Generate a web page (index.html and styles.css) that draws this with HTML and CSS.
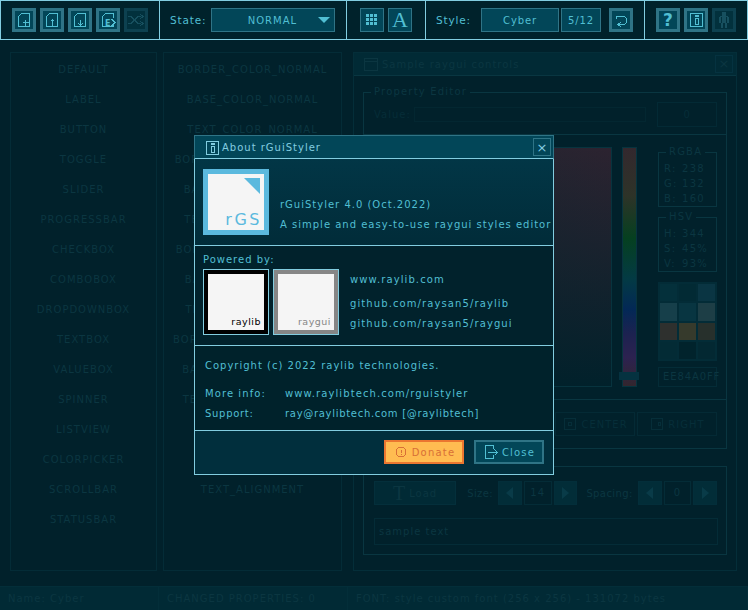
FILE: index.html
```html
<!DOCTYPE html>
<html lang="en">
<head>
  <meta charset="UTF-8">
  <title>rGuiStyler</title>
  <link rel="stylesheet" href="styles.css">
</head>
<body>
  <div class="app">
    <!-- Toolbar -->
    <header class="toolbar">
      <section class="tool-section files">
        <button class="tool-btn"><svg class="icon" viewBox="0 0 16 16"><path d="M5.5 1.5H13.5V14.5H2.5V4.5ZM9.5 7.5v6M6.5 10.5h6"/></svg></button>
        <button class="tool-btn"><svg class="icon" viewBox="0 0 16 16"><path d="M5.5 1.5H13.5V14.5H2.5V4.5ZM8.5 7.5v6M6.5 9.5l2-2 2 2"/></svg></button>
        <button class="tool-btn"><svg class="icon" viewBox="0 0 16 16"><path d="M5.5 1.5H13.5V14.5H2.5V4.5ZM8.5 7.5v6M6.5 11.5l2 2 2-2"/></svg></button>
        <button class="tool-btn"><svg class="icon" viewBox="0 0 16 16"><path d="M13.5 6V1.5H5.5L2.5 4.5V14.5H13.5V13M11.5 7l3.5 3.5-3.5 3.5"/><text class="icon-letter" x="5" y="14">E</text></svg></button>
        <button class="tool-btn off"><svg class="icon" viewBox="0 0 16 16"><path d="M0 4.5h3l7 7h3M0 11.5h3l7-7h3M12 2l3 2.5-3 2.5M12 9l3 2.5-3 2.5"/></svg></button>
      </section>
      <section class="tool-section state">
        <span class="tool-label">State:</span>
        <div class="dropdown">
          <span class="caps">NORMAL</span>
          <span class="dropdown-arrow"></span>
        </div>
      </section>
      <section class="tool-section view">
        <button class="thin-btn">
          <svg class="icon solid" viewBox="0 0 16 16">
            <rect x="2" y="2" width="3" height="3"/><rect x="6" y="2" width="3" height="3"/><rect x="10" y="2" width="3" height="3"/>
            <rect x="2" y="6" width="3" height="3"/><rect x="6" y="6" width="3" height="3"/><rect x="10" y="6" width="3" height="3"/>
            <rect x="2" y="10" width="3" height="3"/><rect x="6" y="10" width="3" height="3"/><rect x="10" y="10" width="3" height="3"/>
          </svg>
        </button>
        <button class="thin-btn font-btn">A</button>
      </section>
      <section class="tool-section style">
        <span class="tool-label">Style:</span>
        <div class="style-name">Cyber</div>
        <div class="style-count">5/12</div>
        <button class="tool-btn"><svg class="icon" viewBox="0 0 16 16"><path d="M3.5 6.5V4.5H11.5L13.5 6.5V10.5L11.5 12.5H5.5M8 10l-3 2.5L8 15"/></svg></button>
      </section>
      <section class="tool-section help">
        <button class="tool-btn qmark">?</button>
        <button class="tool-btn"><svg class="icon" viewBox="0 0 16 16"><path d="M2.5 1.5H14.5V14.5H2.5ZM7.5 6.5H10.5V12.5H7.5ZM7.5 3.5H10.5V4.5H7.5Z"/></svg></button>
        <button class="tool-btn off"><svg class="icon solid" viewBox="0 0 16 16"><rect x="6" y="0" width="4" height="4"/><rect x="4" y="4" width="8" height="1"/><rect x="3" y="5" width="2" height="6"/><rect x="11" y="5" width="2" height="6"/><rect x="6" y="5" width="4" height="6"/><rect x="5" y="11" width="2" height="5"/><rect x="9" y="11" width="2" height="5"/></svg></button>
      </section>
    </header>

    <!-- Dimmed editor behind the dialog -->
    <main class="workspace">
      <div class="list controls">
        <div>DEFAULT</div><div>LABEL</div><div>BUTTON</div><div>TOGGLE</div><div>SLIDER</div>
        <div>PROGRESSBAR</div><div>CHECKBOX</div><div>COMBOBOX</div><div>DROPDOWNBOX</div><div>TEXTBOX</div>
        <div>VALUEBOX</div><div>SPINNER</div><div>LISTVIEW</div><div>COLORPICKER</div><div>SCROLLBAR</div><div>STATUSBAR</div>
      </div>
      <div class="list props">
        <div>BORDER_COLOR_NORMAL</div><div>BASE_COLOR_NORMAL</div><div>TEXT_COLOR_NORMAL</div>
        <div>BORDER_COLOR_FOCUSED</div><div>BASE_COLOR_FOCUSED</div><div>TEXT_COLOR_FOCUSED</div>
        <div>BORDER_COLOR_PRESSED</div><div>BASE_COLOR_PRESSED</div><div>TEXT_COLOR_PRESSED</div>
        <div>BORDER_COLOR_DISABLED</div><div>BASE_COLOR_DISABLED</div><div>TEXT_COLOR_DISABLED</div>
        <div>BORDER_WIDTH</div><div>TEXT_PADDING</div><div>TEXT_ALIGNMENT</div>
      </div>
      <div class="window">
        <div class="window-title">
          <svg class="icon" viewBox="0 0 16 16"><path d="M1.5 2.5H14.5V14.5H1.5ZM1.5 5.5H14.5"/></svg>
          <span>Sample raygui controls</span>
          <span class="window-close">×</span>
        </div>
        <div class="window-body">
          <div class="group prop-group">
            <span class="group-title">Property Editor</span>
            <span class="dim-label">Value:</span>
            <div class="value-input"></div>
            <div class="value-box">0</div>
          </div>
          <div class="group color-group">
            <div class="color-panel"></div>
            <div class="hue-bar"><span class="hue-handle"></span></div>
            <div class="color-side">
              <div class="group mini">
                <span class="group-title">RGBA</span>
                <div><span>R:</span>238</div>
                <div><span>G:</span>132</div>
                <div><span>B:</span>160</div>
              </div>
              <div class="group mini">
                <span class="group-title">HSV</span>
                <div><span>H:</span>344</div>
                <div><span>S:</span>45%</div>
                <div><span>V:</span>93%</div>
              </div>
              <div class="palette">
                <i class="c1"></i><i class="c2"></i><i class="c3"></i>
                <i class="c4"></i><i class="c5"></i><i class="c6"></i>
                <i class="c7"></i><i class="c8"></i><i class="c9"></i>
                <i class="c10"></i><i class="c11"></i><i class="c12"></i>
              </div>
              <div class="hex-box">EE84A0FF</div>
            </div>
          </div>
          <div class="group align-group">
            <div class="align-btn">LEFT</div>
            <div class="align-btn"><svg class="icon" viewBox="0 0 16 16"><path d="M2.5 2.5H13.5V13.5H2.5ZM6.5 6.5H9.5V9.5H6.5Z"/></svg>CENTER</div>
            <div class="align-btn"><svg class="icon" viewBox="0 0 16 16"><path d="M2.5 2.5H13.5V13.5H2.5ZM9.5 6.5H11.5V9.5H9.5Z"/></svg>RIGHT</div>
          </div>
          <div class="group font-group">
            <div class="font-row">
              <div class="load-btn"><span class="load-t">T</span>Load</div>
              <span class="font-label size-label">Size:</span>
              <div class="spin-btn"><span class="arrow-left"></span></div>
              <div class="spin-value">14</div>
              <div class="spin-btn"><span class="arrow-right"></span></div>
              <span class="font-label spacing-label">Spacing:</span>
              <div class="spin-btn"><span class="arrow-left"></span></div>
              <div class="spin-value">0</div>
              <div class="spin-btn"><span class="arrow-right"></span></div>
            </div>
            <div class="sample-box">sample text</div>
          </div>
        </div>
      </div>
    </main>

    <footer class="statusbar">
      <div class="status-name">Name: Cyber</div>
      <div class="status-changes">CHANGED PROPERTIES: 0</div>
      <div class="status-font">FONT: style custom font (256 x 256) - 131072 bytes</div>
    </footer>
  </div>

  <!-- About dialog -->
  <div class="about">
    <div class="about-title">
      <svg class="icon" viewBox="0 0 16 16"><path d="M2.5 1.5H14.5V14.5H2.5ZM7.5 6.5H10.5V12.5H7.5ZM7.5 3.5H10.5V4.5H7.5Z"/></svg>
      <span>About rGuiStyler</span>
      <button class="about-x">×</button>
    </div>

    <div class="about-head">
      <div class="logo-rgs">
        <span class="logo-corner"></span>
        <span class="logo-rgs-text">rGS</span>
      </div>
      <div class="about-desc">
        <p>rGuiStyler 4.0 (Oct.2022)</p>
        <p>A simple and easy-to-use raygui styles editor</p>
      </div>
    </div>

    <div class="about-powered">
      <div>
        <p class="powered-label">Powered by:</p>
        <div class="powered-logos">
          <div class="logo-box raylib"><span>raylib</span></div>
          <div class="logo-box raygui"><span>raygui</span></div>
        </div>
      </div>
      <div class="powered-links">
        <p>www.raylib.com</p>
        <p>github.com/raysan5/raylib</p>
        <p>github.com/raysan5/raygui</p>
      </div>
    </div>

    <div class="about-info">
      <p class="copyright">Copyright (c) 2022 raylib technologies.</p>
      <p class="info-row"><span>More info:</span>www.raylibtech.com/rguistyler</p>
      <p class="info-row support"><span>Support:</span>ray@raylibtech.com [@raylibtech]</p>
    </div>

    <div class="about-foot">
      <button class="donate">
        <svg class="icon" viewBox="0 0 16 16"><path d="M5.5 3.5H10.5L12.5 5.5V10.5L10.5 12.5H5.5L3.5 10.5V5.5ZM8.5 5.5V8.5M8.5 10V11"/></svg>
        Donate
      </button>
      <button class="close">
        <svg class="icon" viewBox="0 0 16 16"><path d="M10.5 5V1.5H2.5V14.5H10.5V11M5 8.5H14M11.5 5.5l3 3-3 3"/></svg>
        Close
      </button>
    </div>
  </div>
</body>
</html>
```

FILE: styles.css
```css
* {
  box-sizing: border-box;
}
html, body {
  margin: 0;
  height: 100%;
}
body {
  position: relative;
  width: 748px;
  height: 610px;
  overflow: hidden;
  background-color: #01212b;
  color: #51bfd3;
  font-family: 'DejaVu Sans', sans-serif;
  font-size: 10px;
  letter-spacing: 1px;
}
p {
  margin: 0;
}
button {
  font: inherit;
  letter-spacing: inherit;
  color: inherit;
  padding: 0;
}
.icon {
  display: block;
  width: 16px;
  height: 16px;
  flex: none;
  fill: none;
  stroke: currentColor;
  shape-rendering: crispEdges;
}
.icon.solid {
  fill: currentColor;
  stroke: none;
}
.icon-letter {
  fill: currentColor;
  stroke: none;
  font-size: 8px;
  font-weight: bold;
  letter-spacing: 0;
}

.app {
  display: flex;
  flex-direction: column;
  height: 610px;
}

/* toolbar */
.toolbar {
  display: flex;
  flex: none;
  height: 40px;
  background-color: #00222b;
  border: 1px solid #82cde0;
}
.tool-section {
  display: flex;
  align-items: center;
  border-right: 1px solid #82cde0;
}
.tool-section:last-child {
  border-right: none;
}
.files {
  width: 159px;
  padding-left: 11px;
  gap: 4px;
}
.state {
  width: 187px;
  padding-left: 10px;
}
.view {
  width: 79px;
  padding-left: 13px;
  gap: 4px;
}
.style {
  width: 219px;
  padding-left: 10px;
}
.help {
  flex: 1;
  padding-left: 11px;
  gap: 4px;
}
.tool-label {
  font-size: 10.5px;
  letter-spacing: 0.85px;
}
.tool-btn {
  display: flex;
  align-items: center;
  justify-content: center;
  width: 24px;
  height: 24px;
  background-color: #024658;
  border: 3px solid #2f7486;
}
.tool-btn.off {
  background-color: #02313d;
  border-color: #0d4150;
  color: #17505f;
}
.qmark {
  font-size: 17px;
  font-weight: bold;
  letter-spacing: 0;
}
.thin-btn {
  display: flex;
  align-items: center;
  justify-content: center;
  width: 24px;
  height: 24px;
  background-color: #024658;
  border: 1px solid #2f7486;
}
.font-btn {
  font-family: 'Liberation Serif', serif;
  font-size: 22px;
  letter-spacing: 0;
  line-height: 22px;
}
.dropdown {
  display: flex;
  align-items: center;
  justify-content: center;
  position: relative;
  width: 124px;
  height: 24px;
  margin-left: 5px;
  padding-right: 2px;
  background-color: #024658;
  border: 1px solid #2f7486;
}
.caps {
  letter-spacing: 1px;
}
.dropdown-arrow {
  position: absolute;
  right: 4px;
  top: 8px;
  border-left: 6px solid transparent;
  border-right: 6px solid transparent;
  border-top: 6px solid #51bfd3;
}
.style-name,
.style-count {
  display: flex;
  align-items: center;
  justify-content: center;
  height: 24px;
  background-color: #024658;
  border: 1px solid #2f7486;
  letter-spacing: 0.9px;
}
.style-name {
  width: 78px;
  margin-left: 10px;
}
.style-count {
  width: 40px;
  margin: 0 8px 0 2px;
}

/* dimmed editor */
.workspace {
  display: flex;
  flex: 1;
  padding: 12px 10px 15px;
  color: #0b3641;
}
.list {
  display: flex;
  flex-direction: column;
  height: 519px;
  padding-top: 2px;
  border: 1px solid #042c37;
  letter-spacing: 1px;
  text-align: center;
}
.list div {
  height: 30px;
  line-height: 30px;
}
.controls {
  width: 147px;
  margin-right: 6px;
}
.props {
  width: 179px;
  margin-right: 11px;
}
.window {
  width: 384px;
  height: 519px;
  border: 1px solid #042e39;
  color: #0b3641;
}
.window-title {
  display: flex;
  align-items: center;
  gap: 3px;
  height: 23px;
  padding-left: 9px;
  background-color: #012a35;
  border-bottom: 1px solid #093641;
}
.window-close {
  margin-left: auto;
  margin-right: 3px;
  width: 18px;
  height: 18px;
  border: 1px solid #053240;
  text-align: center;
  line-height: 15px;
  font-size: 13px;
  letter-spacing: 0;
}
.window-body {
  padding: 16px 9px;
}
.group {
  position: relative;
  border: 1px solid #093641;
}
.group-title {
  position: absolute;
  top: -7px;
  left: 7px;
  padding: 0 3px;
  background-color: #01212b;
  line-height: 12px;
  letter-spacing: 1.2px;
}
.prop-group {
  display: flex;
  align-items: center;
  height: 43px;
  padding: 2px 9px 0 10px;
}
.dim-label {
  width: 40px;
  color: #062d38;
}
.value-input {
  width: 233px;
  height: 15px;
  border: 1px solid #032731;
}
.value-box {
  width: 60px;
  height: 25px;
  margin-left: 11px;
  border: 1px solid #032a35;
  color: #062d38;
  text-align: center;
  line-height: 23px;
}
.color-group {
  display: flex;
  height: 266px;
  margin-top: -1px;
  padding: 12px 9px 0;
}
.color-panel {
  width: 239px;
  height: 240px;
  border: 1px solid #07333e;
  background: linear-gradient(to bottom, transparent, #01212b), linear-gradient(to right, #1a2630, #2c2330);
}
.hue-bar {
  position: relative;
  width: 15px;
  height: 240px;
  margin: 0 21px 0 10px;
  border: 1px solid #07333e;
  background: linear-gradient(to bottom, #33282e 0%, #2e3328 20%, #054020 38%, #033a44 55%, #032856 68%, #1c2250 78%, #2c2250 88%, #33262e 100%);
}
.hue-handle {
  position: absolute;
  left: -4px;
  top: 224px;
  width: 20px;
  height: 8px;
  background-color: #053240;
}
.color-side {
  display: flex;
  flex-direction: column;
  width: 59px;
  padding-top: 5px;
}
.mini {
  height: 55px;
  margin-bottom: 10px;
  padding: 8px 0 0 5px;
}
.mini div {
  display: flex;
  height: 15px;
  line-height: 15px;
  letter-spacing: 1.3px;
}
.mini div span {
  width: 18px;
}
.palette {
  display: grid;
  grid-template-columns: repeat(3, 1fr);
  grid-template-rows: repeat(4, 1fr);
  gap: 2px;
  height: 79px;
  margin-bottom: 6px;
  padding: 2px;
  background-color: #032c37;
}
.c1 { background-color: #04303b; }
.c2 { background-color: #022a34; }
.c3 { background-color: #0a3543; }
.c4 { background-color: #163f4a; }
.c5 { background-color: #083541; }
.c6 { background-color: #1d3e46; }
.c7 { background-color: #2e302e; }
.c8 { background-color: #363a2c; }
.c9 { background-color: #27302c; }
.c10 { background-color: #032b35; }
.c11 { background-color: #01232c; }
.c12 { background-color: #032832; }
.hex-box {
  height: 20px;
  padding-left: 4px;
  border: 1px solid #042c37;
  line-height: 18px;
  white-space: nowrap;
  letter-spacing: 0.9px;
}
.align-group {
  display: flex;
  justify-content: flex-end;
  gap: 2px;
  height: 50px;
  margin-top: -1px;
  padding: 12px 9px 0;
}
.align-btn {
  display: flex;
  align-items: center;
  justify-content: center;
  gap: 3px;
  width: 80px;
  height: 24px;
  border: 1px solid #042a35;
  color: #062e39;
}
.font-group {
  height: 89px;
  margin-top: 17px;
  padding: 14px 9px 0 10px;
}
.font-row {
  display: flex;
  align-items: center;
  height: 24px;
}
.load-btn {
  display: flex;
  align-items: center;
  justify-content: center;
  gap: 4px;
  width: 83px;
  height: 24px;
  background-color: #012a35;
  border: 1px solid #042f3b;
}
.load-t {
  font-family: 'Liberation Serif', serif;
  font-size: 20px;
  letter-spacing: 0;
}
.font-label {
  letter-spacing: 0.4px;
}
.size-label {
  margin: 0 5px 0 11px;
}
.spacing-label {
  margin: 0 5px 0 9px;
}
.spin-btn {
  display: flex;
  align-items: center;
  justify-content: center;
  width: 24px;
  height: 24px;
  background-color: #022d38;
  border: 1px solid #032e3a;
}
.spin-value {
  width: 28px;
  height: 24px;
  margin: 0 2px;
  border: 1px solid #042c37;
  text-align: center;
  line-height: 22px;
}
.arrow-left,
.arrow-right {
  border-top: 6px solid transparent;
  border-bottom: 6px solid transparent;
}
.arrow-left {
  border-right: 7px solid #093b48;
}
.arrow-right {
  border-left: 7px solid #093b48;
}
.sample-box {
  width: 344px;
  height: 27px;
  margin-top: 13px;
  padding-left: 4px;
  border: 1px solid #042c37;
  line-height: 25px;
}

/* status bar */
.statusbar {
  display: flex;
  flex: none;
  height: 24px;
  background-color: #012a35;
  border-top: 1px solid #032e39;
  color: #0b3641;
  line-height: 24px;
}
.statusbar div {
  padding-left: 8px;
  border-right: 1px solid #032e39;
  white-space: nowrap;
}
.status-name {
  width: 159px;
}
.status-changes {
  width: 189px;
}
.status-font {
  flex: 1;
}

/* about dialog */
.about {
  position: absolute;
  left: 194px;
  top: 135px;
  width: 360px;
  height: 340px;
  display: flex;
  flex-direction: column;
  background-color: #00222b;
  border: 1px solid #82cde0;
}
.about-title {
  display: flex;
  align-items: center;
  flex: none;
  height: 24px;
  margin: -1px -1px 0;
  padding: 1px 0 0 9px;
  gap: 2px;
  background-color: #024658;
  border: 1px solid #2f7486;
  border-bottom: 1px solid #82cde0;
  color: #82cde0;
}
.about-x {
  width: 18px;
  height: 18px;
  margin: -1px 2px 0 auto;
  background: none;
  border: 1px solid #2f7486;
  font-size: 13px;
  line-height: 15px;
  letter-spacing: 0;
}
.about-head {
  display: flex;
  flex: none;
  height: 87px;
  padding: 10px 0 0 8px;
  background: linear-gradient(to bottom, #023646, #012c39);
  border-bottom: 1px solid #82cde0;
}
.logo-rgs {
  position: relative;
  flex: none;
  width: 66px;
  height: 66px;
  background-color: #f5f5f5;
  border: 5px solid #5bb9de;
}
.logo-corner {
  position: absolute;
  right: 4px;
  top: 4px;
  border-top: 16px solid #5bb9de;
  border-left: 16px solid transparent;
}
.logo-rgs-text {
  position: absolute;
  right: 2px;
  bottom: 0;
  color: #5bb9de;
  font-size: 16px;
  line-height: 21px;
  letter-spacing: 2.5px;
}
.about-desc {
  margin-left: 11px;
  padding-top: 26px;
  line-height: 20px;
  white-space: nowrap;
}
.about-powered {
  display: flex;
  flex: none;
  height: 100px;
  padding: 7px 0 0 8px;
  background-color: #01222c;
  border-bottom: 1px solid #82cde0;
}
.powered-label {
  height: 16px;
  line-height: 14px;
}
.powered-logos {
  display: flex;
  gap: 4px;
}
.logo-box {
  display: flex;
  align-items: flex-end;
  justify-content: flex-end;
  width: 66px;
  height: 66px;
  padding: 0 3px 1px 0;
  background-color: #f5f5f5;
  border: 5px solid #000;
  outline: 1px solid #82cde0;
  outline-offset: -1px;
  font-size: 9.5px;
  line-height: 14px;
  letter-spacing: 0.5px;
}
.logo-box.raylib {
  color: #000;
}
.logo-box.raygui {
  border-color: #868686;
  color: #868686;
}
.powered-links {
  margin-left: 11px;
  padding-top: 20px;
  letter-spacing: 1.1px;
}
.powered-links p {
  height: 20px;
  line-height: 14px;
}
.powered-links p:first-child {
  height: 24px;
}
.about-info {
  flex: none;
  height: 85px;
  padding: 13px 0 0 10px;
  background-color: #00222b;
  border-bottom: 1px solid #82cde0;
  line-height: 14px;
}
.copyright {
  height: 28px;
}
.info-row {
  display: flex;
  height: 20px;
  letter-spacing: 1.08px;
}
.info-row.support {
  letter-spacing: 0.7px;
}
.info-row span {
  width: 80px;
}
.about-foot {
  display: flex;
  flex: 1;
  justify-content: flex-end;
  gap: 10px;
  padding: 9px 9px 0 0;
  background-color: #012f3d;
}
.donate,
.close {
  display: flex;
  align-items: center;
  justify-content: center;
  gap: 3px;
  height: 24px;
  letter-spacing: 1.2px;
}
.donate {
  width: 80px;
  background-color: #ffbc51;
  border: 2px solid #eb7630;
  color: #d86f36;
}
.close {
  width: 70px;
  background-color: #024658;
  border: 2px solid #2f7486;
}
```
